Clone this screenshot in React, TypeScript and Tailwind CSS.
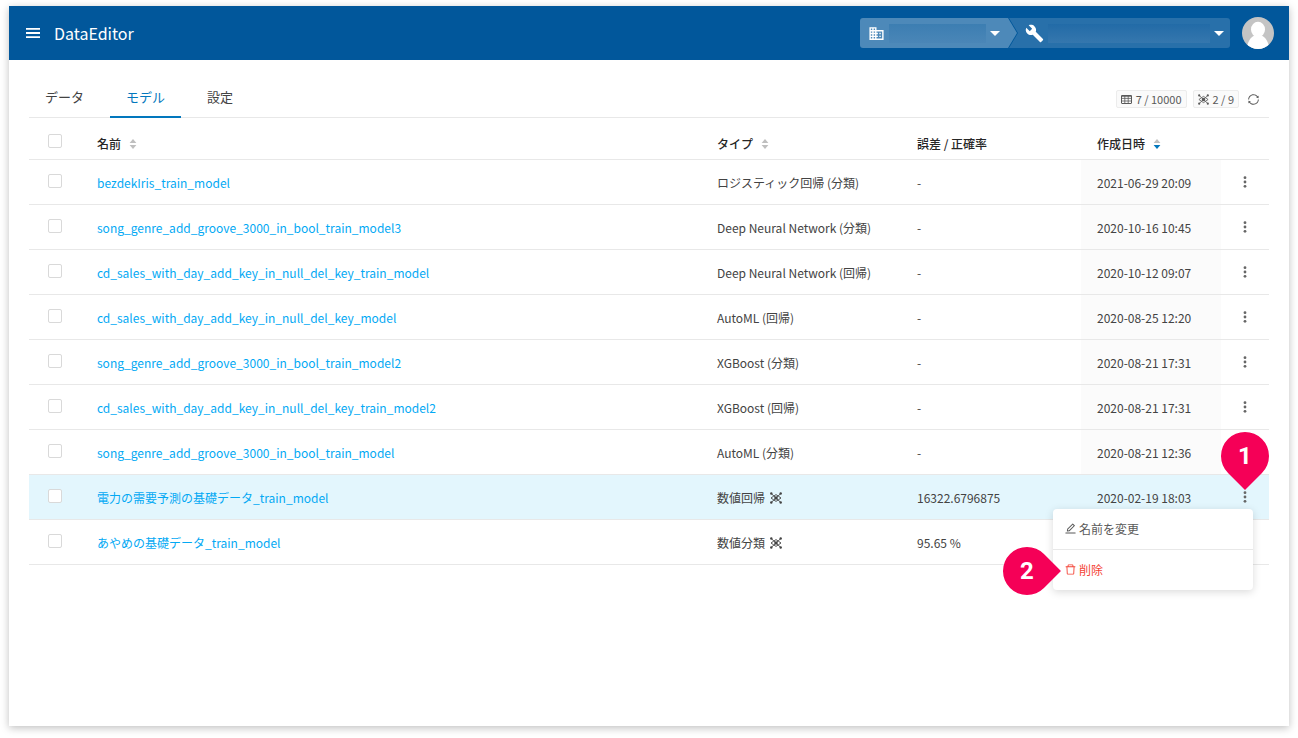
import { ReactNode, useState } from "react";
import clsx from "clsx";
import { AiOutlineDelete, AiOutlineEdit, AiOutlineSync } from "react-icons/ai";
import { MdBuild, MdBusiness } from "react-icons/md";

interface Model {
	id: number,
	name: string,
	type: string,
	trained?: boolean,
	score: string,
	createdAt: string
}

const models: Model[] = [
	{ id: 1, name: "bezdekIris_train_model", type: "ロジスティック回帰 (分類)", score: "-", createdAt: "2021-06-29 20:09" },
	{ id: 2, name: "song_genre_add_groove_3000_in_bool_train_model3", type: "Deep Neural Network (分類)", score: "-", createdAt: "2020-10-16 10:45" },
	{ id: 3, name: "cd_sales_with_day_add_key_in_null_del_key_train_model", type: "Deep Neural Network (回帰)", score: "-", createdAt: "2020-10-12 09:07" },
	{ id: 4, name: "cd_sales_with_day_add_key_in_null_del_key_model", type: "AutoML (回帰)", score: "-", createdAt: "2020-08-25 12:20" },
	{ id: 5, name: "song_genre_add_groove_3000_in_bool_train_model2", type: "XGBoost (分類)", score: "-", createdAt: "2020-08-21 17:31" },
	{ id: 6, name: "cd_sales_with_day_add_key_in_null_del_key_train_model2", type: "XGBoost (回帰)", score: "-", createdAt: "2020-08-21 17:31" },
	{ id: 7, name: "song_genre_add_groove_3000_in_bool_train_model", type: "AutoML (分類)", score: "-", createdAt: "2020-08-21 12:36" },
	{ id: 8, name: "電力の需要予測の基礎データ_train_model", type: "数値回帰", trained: true, score: "16322.6796875", createdAt: "2020-02-19 18:03" },
	{ id: 9, name: "あやめの基礎データ_train_model", type: "数値分類", trained: true, score: "95.65 %", createdAt: "" },
];

const tabs = ["データ", "モデル", "設定"];

function MenuIcon() {
	return (
		<svg width="14" height="10" viewBox="0 0 14 10" fill="currentColor">
			<path d="M0 0h14v1.7H0zM0 4.100h14v1.8H0zM0 8.300h14V10H0z" />
		</svg>
	);
}

function CaretIcon() {
	return (
		<svg width="10" height="5" viewBox="0 0 10 5" fill="currentColor" className="shrink-0">
			<path d="M0 0h10L5 5Z" />
		</svg>
	);
}

function GridIcon() {
	return (
		<svg width="11" height="9" viewBox="0 0 11 9" fill="none" stroke="currentColor">
			<rect x="0.5" y="0.5" width="10" height="8" rx="0.5" />
			<path d="M0.5 1h10" strokeWidth="1.4" />
			<path d="M0.5 3.4h10M0.5 6h10M3.8 1v7.5M7.2 1v7.5" strokeWidth="0.8" />
		</svg>
	);
}

function NetworkIcon({ className }: { className: string }) {
	return (
		<svg className={className} viewBox="0 0 12 12" fill="currentColor" stroke="currentColor">
			<path d="M1.3 1.6 10.7 10.4M10.7 1.6 1.3 10.4M1 6 3.6 4.2 6 2.6 8.4 4.2 11 6 8.4 7.8 6 9.4 3.6 7.8Z" fill="none" strokeWidth="0.9" />
			<g stroke="none">
				<circle cx="6" cy="6" r="1.8" />
				<circle cx="1.3" cy="1.5" r="1.2" />
				<circle cx="10.7" cy="1.5" r="1.2" />
				<circle cx="1.3" cy="10.5" r="1.2" />
				<circle cx="10.7" cy="10.5" r="1.2" />
			</g>
		</svg>
	);
}

function DotsIcon() {
	return (
		<svg width="4" height="12" viewBox="0 0 4 12" fill="currentColor">
			<circle cx="2" cy="1.7" r="1.4" />
			<circle cx="2" cy="6" r="1.4" />
			<circle cx="2" cy="10.3" r="1.4" />
		</svg>
	);
}

function SortIcon({ active }: { active?: boolean }) {
	return (
		<svg width="8" height="10" viewBox="0 0 8 10" className="shrink-0">
			<path d="M4 0 7.4 4H.6Z" fill="#bfbfbf" />
			<path d="M4 10 .6 6h6.8Z" fill={active ? "#0277bd" : "#bfbfbf"} />
		</svg>
	);
}

function Avatar() {
	return (
		<svg width="32" height="32" viewBox="0 0 32 32">
			<defs>
				<clipPath id="avatar">
					<circle cx="16" cy="16" r="16" />
				</clipPath>
			</defs>
			<g clipPath="url(#avatar)">
				<path d="M0 0h32v32H0z" fill="#c4c4c4" />
				<ellipse cx="16" cy="12.5" rx="7" ry="7.8" fill="#fff" />
				<path d="M5 32c0-7 4-12.500 8-13.500h6c4 1 8 6.500 8 13.500Z" fill="#fff" />
			</g>
		</svg>
	);
}

function Checkbox({ label }: { label: string }) {
	return (
		<input
			type="checkbox"
			aria-label={label}
			className="block size-[14px] appearance-none rounded-xs border border-[#d9d9d9] bg-white checked:bg-[#0277bd]"
		/>
	);
}

function HeaderCell({ children, sort }: { children: string, sort?: "none" | "desc" }) {
	return (
		<th className="px-4 pt-[11px] text-left font-medium text-[#262626]">
			<div className="flex items-center gap-2">
				{children}
				{sort && <SortIcon active={sort === "desc"} />}
			</div>
		</th>
	);
}

// drop-shaped step marker, the tip is the only square corner
function Pin({ children, className, shape }: { children: string, className: string, shape: string }) {
	return (
		<div className={clsx("pointer-events-none absolute z-20 flex size-12 items-center justify-center", className)}>
			<span className={clsx("absolute inset-0 rotate-45 rounded-full bg-[#f50057]", shape)} />
			<span className="relative font-['Roboto',sans-serif] text-2xl font-bold text-white">{children}</span>
		</div>
	);
}

function Badge({ children }: { children: ReactNode }) {
	return (
		<span className="flex h-[18px] items-center gap-1 rounded-xs border border-[#ececec] bg-[#fafafa] px-1 text-[11px] text-[#595959]">
			{children}
		</span>
	);
}

function RowMenu() {
	return (
		<div className="absolute top-[34px] right-4 z-10 w-[200px] rounded-sm bg-white shadow-[0_2px_8px_rgba(0,0,0,0.15)]">
			<button className="flex h-10 w-full items-center gap-0.5 px-[11px] text-[#595959]">
				<AiOutlineEdit size={13} />名前を変更
			</button>
			<button className="flex h-[41px] w-full items-center gap-0.5 border-t border-[#e8e8e8] px-[11px] text-[#f44336]">
				<AiOutlineDelete size={13} />削除
			</button>
			<Pin className="top-[38px] -left-[50px]" shape="rounded-tr-none">2</Pin>
		</div>
	);
}

function Header() {
	return (
		<header className="flex h-[54px] items-center bg-[#01579b] px-4 text-white">
			<button aria-label="メニュー" className="px-px">
				<MenuIcon />
			</button>
			<h1 className="ml-[13px] flex-1 text-base">DataEditor</h1>
			<div className="flex h-[30px] overflow-hidden rounded-[3px]">
				<button
					aria-label="組織"
					className="flex w-[157px] items-center gap-1 bg-[#4d89b9] pr-[17px] pl-2 [clip-path:polygon(0_0,calc(100%_-_9px)_0,100%_50%,calc(100%_-_9px)_100%,0_100%)]"
				>
					<MdBusiness size={17} />
					<span className="h-[19px] flex-1 bg-linear-to-b from-[#3c7eb2] to-[#4a86b7]" />
					<CaretIcon />
				</button>
				<button
					aria-label="プロジェクト"
					className="-ml-2 flex w-[221px] items-center gap-1 bg-[#2870aa] pr-1.5 pl-4 [clip-path:polygon(0_0,100%_0,100%_100%,0_100%,9px_50%)]"
				>
					<MdBuild size={19} />
					<span className="h-[19px] flex-1 bg-linear-to-b from-[#226ba7] to-[#3577ae]" />
					<CaretIcon />
				</button>
			</div>
			<button aria-label="アカウント" className="ml-3 -mr-px">
				<Avatar />
			</button>
		</header>
	);
}

function App() {
	const [tab, setTab] = useState("モデル");
	const [openMenu, setOpenMenu] = useState<number | null>(8);

	return (
		<div className="flex min-h-screen flex-col bg-white px-[9px] pt-1.5 pb-3 font-['Noto_Sans_CJK_JP',sans-serif] text-xs text-[#434343]">
			<div className="flex flex-1 flex-col bg-white shadow-[0_2px_8px_rgba(0,0,0,0.25)]">
				<Header />
				<main className="px-5 pt-4">
					<div className="flex h-[42px] items-stretch border-b border-[#e8e8e8]">
						<nav className="-mb-px flex flex-1 gap-2.5 text-[13px]">
							{tabs.map((name) => (
								<button
									key={name}
									onClick={() => setTab(name)}
									className={clsx(
										"border-b-2 px-4 pt-0.5",
										tab === name ? "border-[#0277bd] text-[#0277bd]" : "border-transparent"
									)}
								>
									{name}
								</button>
							))}
						</nav>
						<div className="mt-[5px] flex items-center gap-1.5 pr-[9px]">
							<Badge><GridIcon />7 / 10000</Badge>
							<Badge><NetworkIcon className="size-[11px]" />2 / 9</Badge>
							<button aria-label="更新" className="ml-0.5 text-[#595959]">
								<AiOutlineSync size={13} />
							</button>
						</div>
					</div>
					<table className="w-full table-fixed border-collapse">
						<colgroup>
							<col className="w-[52px]" />
							<col />
							<col className="w-[200px]" />
							<col className="w-[180px]" />
							<col className="w-[140px]" />
							<col className="w-12" />
						</colgroup>
						<thead>
							<tr className="h-[41px] border-b border-[#e8e8e8]">
								<th className="pt-[5px] pl-[19px]"><Checkbox label="すべて選択" /></th>
								<HeaderCell sort="none">名前</HeaderCell>
								<HeaderCell sort="none">タイプ</HeaderCell>
								<HeaderCell>誤差 / 正確率</HeaderCell>
								<HeaderCell sort="desc">作成日時</HeaderCell>
								<th />
							</tr>
						</thead>
						<tbody>
							{models.map((model) => {
								const open = openMenu === model.id;
								return (
									<tr key={model.id} className={clsx("h-[45px] border-b border-[#e8e8e8]", open && "bg-[#e3f6fd]")}>
										<td className="pb-0.5 pl-[19px]"><Checkbox label={model.name} /></td>
										<td className="px-4 pt-0.5">
											<a href="#" className="text-[#03a9f4]">{model.name}</a>
										</td>
										<td className="px-4 pt-0.5">
											<div className="flex items-center gap-[5px]">
												{model.type}
												{model.trained && <NetworkIcon className="size-3" />}
											</div>
										</td>
										<td className="px-4 pt-0.5">{model.score}</td>
										<td className={clsx("px-4 pt-0.5 whitespace-nowrap", !open && "bg-[#fbfbfb]")}>{model.createdAt}</td>
										<td className="relative">
											<button
												aria-label="操作"
												onClick={() => setOpenMenu(open ? null : model.id)}
												className="flex w-full justify-center py-2 text-[#666]"
											>
												<DotsIcon />
											</button>
											{open && <RowMenu />}
											{open && <Pin className="-top-[43px] left-0" shape="rounded-br-none">1</Pin>}
										</td>
									</tr>
								);
							})}
						</tbody>
					</table>
				</main>
			</div>
		</div>
	);
}

export default App
